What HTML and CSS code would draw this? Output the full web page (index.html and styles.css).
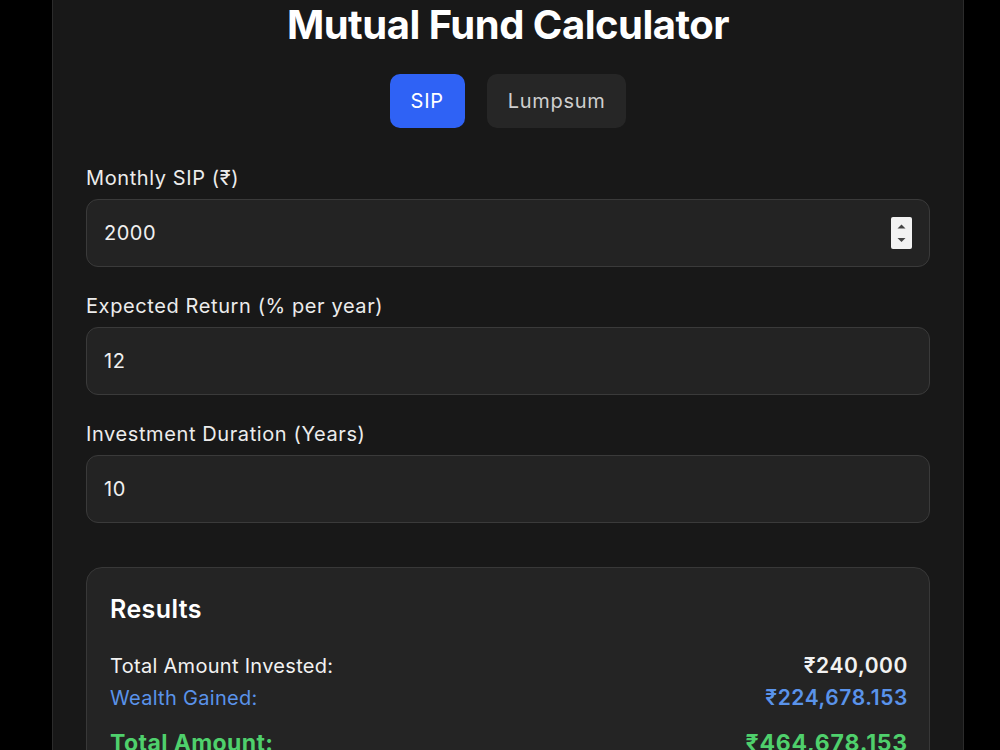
FILE: index.html
```html
<!DOCTYPE html>
<html lang="en">
<head>
    <meta charset="UTF-8">
    <meta name="viewport" content="width=device-width, initial-scale=1.0">
    <title>Mutual Fund Calculator</title>
    <link rel="stylesheet" href="styles.css">
</head>
<body>
    <div class="calculator">
        <h1>Mutual Fund Calculator</h1>
        <div class="mode-toggle">
            <button class="mode active">SIP</button>
            <button class="mode">Lumpsum</button>
        </div>

        <div class="field">
            <label for="amount">Monthly SIP (&#8377;)</label>
            <div class="input-box">
                <input type="text" id="amount" value="2000">
                <span class="spinner">
                    <svg width="21" height="32" viewBox="0 0 21 32">
                        <path d="M6.5 11.5 L10.5 7.5 L14.5 11.5 Z" fill="#444"/>
                        <path d="M6.5 21 L10.5 25 L14.5 21 Z" fill="#444"/>
                    </svg>
                </span>
            </div>
        </div>

        <div class="field">
            <label for="rate">Expected Return (% per year)</label>
            <div class="input-box">
                <input type="text" id="rate" value="12">
            </div>
        </div>

        <div class="field">
            <label for="years">Investment Duration (Years)</label>
            <div class="input-box">
                <input type="text" id="years" value="10">
            </div>
        </div>

        <div class="results">
            <h2>Results</h2>
            <div class="row">
                <span>Total Amount Invested:</span>
                <strong>&#8377;240,000</strong>
            </div>
            <div class="row gained">
                <span>Wealth Gained:</span>
                <strong>&#8377;224,678.153</strong>
            </div>
            <div class="row total">
                <span>Total Amount:</span>
                <strong>&#8377;464,678.153</strong>
            </div>
        </div>
    </div>
</body>
</html>
```

FILE: styles.css
```css
body {
    display: flex;
    align-items: center;
    height: 100vh;
    margin: 0;
    overflow: hidden;
    background-color: #000;
    color: #fff;
    font-family: Inter, "Noto Sans", "DejaVu Sans", sans-serif;
    letter-spacing: 0.4px;
}
.calculator {
    box-sizing: border-box;
    width: 912px;
    margin-left: 52px;
    padding: 32px 33px;
    background-color: #181818;
    border: 1px solid #2b2b2b;
    border-radius: 16px;
    flex-shrink: 0;
}
h1 {
    margin: 32px 0 25px;
    font-size: 40px;
    line-height: 48px;
    font-weight: 700;
    text-align: center;
    letter-spacing: -0.5px;
}
.mode-toggle {
    display: flex;
    justify-content: center;
    gap: 22px;
    margin-bottom: 38px;
}
.mode {
    height: 54px;
    padding: 0 21px;
    border: none;
    border-radius: 10px;
    background-color: #262626;
    color: #cfcfcf;
    font-family: inherit;
    font-size: 20px;
    letter-spacing: 0.7px;
}
.mode.active {
    background-color: #2f62f5;
    color: #fff;
}
.field {
    margin-bottom: 27px;
}
.field label {
    display: block;
    margin-bottom: 9px;
    font-size: 20px;
    line-height: 24px;
    color: #ececec;
    letter-spacing: 0.6px;
}
.input-box {
    display: flex;
    align-items: center;
    box-sizing: border-box;
    height: 68px;
    padding: 0 17px;
    background-color: #232323;
    border: 1px solid #3a3a3a;
    border-radius: 12px;
}
.input-box input {
    flex: 1;
    min-width: 0;
    padding: 0;
    border: none;
    background: transparent;
    color: #f0f0f0;
    font-family: inherit;
    font-size: 20px;
    letter-spacing: 0.5px;
}
.input-box input:focus {
    outline: none;
}
.spinner {
    display: block;
    width: 21px;
    height: 32px;
    background-color: #f2f2f2;
    border-radius: 2px;
}
.spinner svg {
    display: block;
}
.results {
    margin-top: 44px;
    padding: 23px 21px 23px 23px;
    background-color: #242424;
    border: 1px solid #383838;
    border-radius: 16px;
}
.results h2 {
    margin: 0 0 27px;
    font-size: 25px;
    line-height: 36px;
    font-weight: 600;
    letter-spacing: 0.4px;
}
.row {
    display: flex;
    justify-content: space-between;
    align-items: baseline;
    margin-bottom: 8px;
    font-size: 20px;
    line-height: 24px;
    color: #f2f2f2;
    letter-spacing: 0.3px;
}
.row strong {
    font-size: 21px;
    font-weight: 600;
    letter-spacing: 0.6px;
}
.row.gained {
    color: #5a93ea;
    margin-bottom: 19px;
}
.row.total {
    margin-bottom: 0;
    font-size: 23px;
    line-height: 28px;
    font-weight: 700;
    color: #4fd06c;
    letter-spacing: 0.4px;
}
.row.total strong {
    font-size: 23px;
    font-weight: 700;
    letter-spacing: 0.8px;
}
```
